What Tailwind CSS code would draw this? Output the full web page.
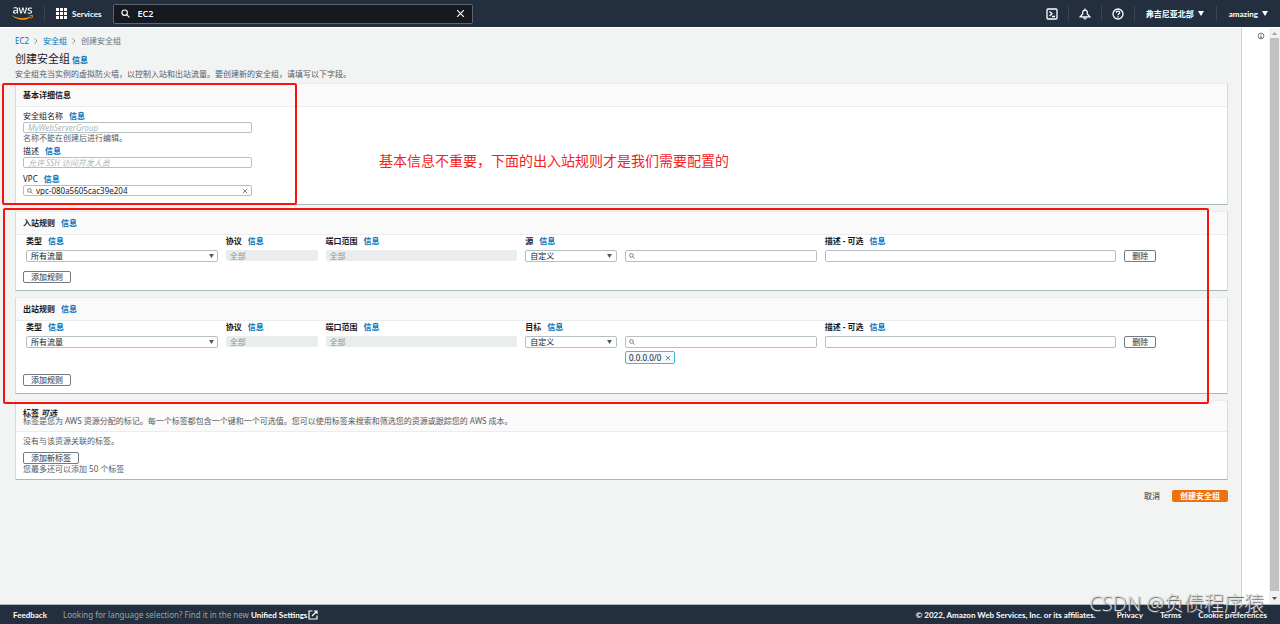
<!DOCTYPE html>
<html lang="zh-CN">
<head>
<meta charset="utf-8">
<meta name="viewport" content="width=device-width, initial-scale=1">
<title>创建安全组 | EC2</title>
<script src="https://cdn.jsdelivr.net/npm/@tailwindcss/browser@4"></script>
</head>
<body class="font-['Noto_Sans','Noto_Sans_CJK_SC',sans-serif] text-[8px] leading-3 text-[#16191f] bg-[#f2f3f3]">
<svg class="hidden" aria-hidden="true">
  <symbol id="search" viewBox="0 0 16 16"><circle cx="6.5" cy="6.5" r="4.8" fill="none" stroke="currentColor" stroke-width="2"/><path d="M10 10l5 5" stroke="currentColor" stroke-width="2"/></symbol>
  <symbol id="close" viewBox="0 0 16 16"><path d="M2 2l12 12M14 2L2 14" fill="none" stroke="currentColor" stroke-width="2"/></symbol>
  <symbol id="caret" viewBox="0 0 10 8"><path d="M0 0h10L5 8z" fill="currentColor"/></symbol>
</svg>
<div class="relative flex min-h-screen flex-col">
  <header class="flex h-[27px] items-center bg-[#232f3e] pr-3 font-['Lato','Noto_Sans_CJK_SC',sans-serif] font-bold text-white">
    <a href="#" aria-label="AWS" class="ml-3 w-[21px]">
      <svg viewBox="0 0 304 182" class="h-[13px] w-[21px]"><path fill="#fff" d="M86.4 66.4c0 3.7.4 6.7 1.1 8.9.8 2.200 1.800 4.600 3.200 7.200.5.8.7 1.600.7 2.300 0 1-.6 2-1.900 3l-6.300 4.200c-.9.6-1.800.9-2.600.9-1 0-2-.5-3-1.400-1.400-1.500-2.600-3.100-3.600-4.700-1-1.700-2-3.600-3.100-5.900-7.800 9.200-17.600 13.800-29.400 13.800-8.400 0-15.100-2.400-20-7.200-4.900-4.800-7.400-11.200-7.400-19.200 0-8.500 3-15.400 9.100-20.600 6.100-5.200 14.200-7.800 24.500-7.800 3.400 0 6.900.3 10.600.8 3.700.5 7.500 1.300 11.500 2.200v-7.300c0-7.600-1.600-12.900-4.700-16-3.200-3.100-8.600-4.600-16.300-4.600-3.500 0-7.100.4-10.800 1.300-3.700.9-7.300 2-10.800 3.400-4.700 2-6.600.8-6.600-3.300v-4.900c0-3 .5-4.400 3.600-6 8.300-4.100 18.200-6.100 28.700-5.900 12.100 0 20.900 2.700 26.600 8.200 5.600 5.500 8.500 13.800 8.500 25v32.900zM45.800 81.600c3.300 0 6.700-.6 10.300-1.800 7.200-2.400 12-8.700 13-15.200V55c-17-4.100-35-3.100-35 12 0 9.500 3.900 14.600 11.700 14.600zm80.300 10.800c-3.400 0-4.900-1.200-5.900-4.300L96.700 10.800c-1.300-4.500-.4-5.900 3.100-5.900h9.800c3.400 0 4.900 1.300 5.900 4.300l16.800 66.200 15.600-66.200c.9-3.100 2.400-4.300 5.900-4.300h8c3.500 0 5 1.300 5.900 4.300l15.800 67 17.300-67c1-3 2.500-4.300 5.900-4.300h9.300c3.200 0 4.200 1.700 3.100 5.900L195 88.100c-1 3.100-2.500 4.300-5.900 4.300h-8.600c-3.500 0-5-1.300-5.900-4.400L159.100 23.500l-15.400 64.400c-.9 3.100-2.400 4.400-5.900 4.400zm128.500 2.700c-10.500 0-20.600-2.300-26-5.400-3.300-1.900-3.500-3.300-3.500-6.500v-5.100c0-3.500 1.600-4.500 6.500-2.600 7.500 3.200 14.500 5 23 5 12 0 18.200-4.300 18.200-12.300 0-7-3-9.100-13.100-12.300l-14.100-4.400C232.400 47.800 227 39.500 227 30c0-16.500 13.500-26.500 32.500-26.500 9 0 17.500 1.500 24.300 4.700 4.500 2.200 5.200 3.500 5.200 7v4.700c0 3.900-1.600 5-6 3-6-2.700-12.500-4.200-20.200-4.200-11 0-17 3.600-17 11 0 6.200 3.200 9 13.400 12.200l13.800 4.400C286.500 50.700 292 57.500 292 67.400c0 18-14.500 27.700-37.400 27.700z"/><path fill="#f90" d="M273.500 143.700c-32.900 24.300-80.700 37.200-121.800 37.200-57.600 0-109.500-21.300-148.700-56.700-3.100-2.800-.3-6.600 3.400-4.400 42.400 24.600 94.700 39.500 148.800 39.500 36.500 0 76.600-7.600 113.500-23.200 5.500-2.500 10.200 3.600 4.800 7.600z"/><path fill="#f90" d="M287.200 128.100c-4.200-5.400-27.800-2.600-38.500-1.300-3.200.4-3.700-2.400-.8-4.500 18.800-13.200 49.700-9.400 53.300-5 3.600 4.500-1 35.400-18.600 50.200-2.700 2.300-5.300 1.100-4.100-1.900 4-9.900 12.900-32.200 8.700-37.500z"/></svg>
    </a>
    <span class="ml-[11px] h-[15px] w-px bg-[#3b4654]"></span>
    <button type="button" class="ml-[11px] flex items-center gap-[5px] text-[8px]">
      <svg viewBox="0 0 11 11" class="size-[11px]" fill="#fff"><path d="M0 0h3v3H0zM4 0h3v3H4zM8 0h3v3H8zM0 4h3v3H0zM4 4h3v3H4zM8 4h3v3H8zM0 8h3v3H0zM4 8h3v3H4zM8 8h3v3H8z"/></svg>
      Services
    </button>
    <label class="ml-3 flex h-5 w-[360px] items-center rounded-xs border border-[#5c6670] bg-[#16191f] px-[7px]">
      <svg class="size-[9px] shrink-0"><use href="#search"/></svg>
      <input aria-label="搜索" value="EC2" class="ml-[7px] min-w-0 flex-1 bg-transparent font-['Open_Sans',sans-serif] text-[9px] font-semibold outline-none">
      <svg class="size-[9px] shrink-0"><use href="#close"/></svg>
    </label>
    <nav class="ml-auto flex items-center">
      <button type="button" aria-label="CloudShell"><svg viewBox="0 0 12 12" class="size-[12px]" fill="none" stroke="#fff" stroke-width="1.300"><rect x="1" y="1" width="10" height="10" rx="1"/><path d="M3.500 3.500L6 5.700 3.500 8M6 8.500h3"/></svg></button>
      <span class="ml-[10px] h-[15px] w-px bg-[#3b4654]"></span>
      <button type="button" aria-label="通知" class="ml-[10px]"><svg viewBox="0 0 12 12" class="size-[12px]" fill="none" stroke="#fff" stroke-width="1.200"><path d="M6 .5v1M3.700 6V4.500a2.300 2.300 0 014.600 0V6l2.500 2.800H1.200zM4.700 9.200q0 1.800 1.300 1.800t1.300-1.800"/></svg></button>
      <span class="ml-[10px] h-[15px] w-px bg-[#3b4654]"></span>
      <button type="button" aria-label="帮助" class="ml-[10px]"><svg viewBox="0 0 12 12" class="size-[12px]" fill="none" stroke="#fff" stroke-width="1.300"><circle cx="6" cy="6" r="5"/><path d="M4.300 4.800C4.300 2.700 7.700 2.700 7.700 4.700 7.700 5.800 6 5.800 6 7.200M6 8.200v1.200"/></svg></button>
      <span class="ml-[10px] h-[15px] w-px bg-[#3b4654]"></span>
      <button type="button" class="ml-[11px] flex items-center gap-1">弗吉尼亚北部 <svg class="h-[5px] w-[6px]"><use href="#caret"/></svg></button>
      <span class="ml-3 h-[15px] w-px bg-[#3b4654]"></span>
      <button type="button" class="ml-3 flex items-center gap-1">amazing <svg class="h-[5px] w-[6px]"><use href="#caret"/></svg></button>
    </nav>
  </header>

  <div class="flex flex-1 border-t border-white">
    <main class="min-w-0 flex-1 pt-[7px] pr-[13px] pl-[15px]">
      <nav class="flex items-center gap-[5px] text-[#687078]" aria-label="导航路径">
        <a href="#" class="text-[#0073bb]">EC2</a>
        <svg viewBox="0 0 4 6" class="h-[6px] w-[4px]" fill="none" stroke="#879596"><path d="M.5.5L3 3 .5 5.500"/></svg>
        <a href="#" class="text-[#0073bb]">安全组</a>
        <svg viewBox="0 0 4 6" class="h-[6px] w-[4px]" fill="none" stroke="#879596"><path d="M.5.5L3 3 .5 5.500"/></svg>
        <span>创建安全组</span>
      </nav>
      <div class="mt-1 flex items-baseline gap-0.5">
        <h1 class="text-[11px] leading-4">创建安全组</h1>
        <a href="#" class="font-bold text-[#0073bb]">信息</a>
      </div>
      <p class="mt-px mb-[3px] text-[#545b64]">安全组充当实例的虚拟防火墙，以控制入站和出站流量。要创建新的安全组，请填写以下字段。</p>

      <form class="flex flex-col gap-[6px]">
        <section class="border border-b-[#aab7b8] border-x-[#d5dbdb] border-t-[#eaeded] bg-white">
          <div class="flex h-[23px] items-center border-b border-[#eaeded] bg-[#fafafa] px-[7px]"><h2 class="font-bold">基本详细信息</h2></div>
          <div class="flex flex-col px-[7px] pt-[3px] pb-2">
            <div class="flex gap-[6px]"><label for="name">安全组名称</label><a href="#" class="font-bold text-[#0073bb]">信息</a></div>
            <input id="name" placeholder="MyWebServerGroup" class="h-[11px] w-[229px] rounded-xs border border-[#b5c0c1] bg-white px-1 leading-[9px] placeholder:text-[#aab7b8] placeholder:italic">
            <p class="leading-[9px] text-[#545b64]">名称不能在创建后进行编辑。</p>
            <div class="mt-[3px] flex gap-[6px]"><label for="desc">描述</label><a href="#" class="font-bold text-[#0073bb]">信息</a></div>
            <input id="desc" placeholder="允许 SSH 访问开发人员" class="h-[11px] w-[229px] rounded-xs border border-[#b5c0c1] bg-white px-1 leading-[9px] placeholder:text-[#aab7b8] placeholder:italic">
            <div class="mt-[5px] flex gap-[6px]"><label for="vpc">VPC</label><a href="#" class="font-bold text-[#0073bb]">信息</a></div>
            <div class="flex h-[11px] w-[229px] items-center rounded-xs border border-[#b5c0c1] px-[3px] text-[#545b64]">
              <svg class="size-[6px] shrink-0"><use href="#search"/></svg>
              <input id="vpc" value="vpc-080a5605cac39e204" class="ml-[3px] h-[9px] min-w-0 flex-1 leading-[9px] text-[#16191f] outline-none">
              <button type="button" aria-label="清除" class="flex"><svg class="size-[6px]"><use href="#close"/></svg></button>
            </div>
          </div>
        </section>

        <section class="border border-b-[#aab7b8] border-x-[#d5dbdb] border-t-[#eaeded] bg-white">
          <div class="flex h-[23px] items-center gap-[6px] border-b border-[#eaeded] bg-[#fafafa] px-[7px]"><h2 class="font-bold">入站规则</h2><a href="#" class="font-bold text-[#0073bb]">信息</a></div>
          <div class="px-[7px] pb-[7px]">
            <div class="grid grid-cols-12 gap-x-2 gap-y-1 pr-1 pl-[3px] leading-[11px]">
              <div class="col-span-2 flex gap-[6px] font-bold"><label for="in-type">类型</label><a href="#" class="text-[#0073bb]">信息</a></div>
              <div class="flex gap-[6px] font-bold"><label for="in-proto">协议</label><a href="#" class="text-[#0073bb]">信息</a></div>
              <div class="col-span-2 flex gap-[6px] font-bold"><label for="in-port">端口范围</label><a href="#" class="text-[#0073bb]">信息</a></div>
              <div class="col-span-3 flex gap-[6px] font-bold"><label for="in-src">源</label><a href="#" class="text-[#0073bb]">信息</a></div>
              <div class="col-span-4 flex gap-[6px] font-bold"><label for="in-desc">描述 - 可选</label><a href="#" class="text-[#0073bb]">信息</a></div>
              <div class="relative col-span-2"><select id="in-type" class="block h-3 w-full appearance-none rounded-xs border border-[#b5c0c1] bg-white px-1 leading-[10px]"><option>所有流量</option></select><svg class="pointer-events-none absolute top-1 right-1 h-1 w-[5px] text-[#545b64]"><use href="#caret"/></svg></div>
              <input id="in-proto" disabled value="全部" class="h-[11px] w-full min-w-0 rounded-xs bg-[#eaeded] px-1 text-[#879596]">
              <input id="in-port" disabled value="全部" class="col-span-2 h-[11px] w-full min-w-0 rounded-xs bg-[#eaeded] px-1 text-[#879596]">
              <div class="relative"><select id="in-src" class="block h-3 w-full appearance-none rounded-xs border border-[#b5c0c1] bg-white px-1 leading-[10px]"><option>自定义</option></select><svg class="pointer-events-none absolute top-1 right-[5px] h-1 w-[5px] text-[#545b64]"><use href="#caret"/></svg></div>
              <div class="col-span-2 flex h-3 items-center rounded-xs border border-[#b5c0c1] px-[3px] text-[#545b64]"><svg class="size-[6px] shrink-0"><use href="#search"/></svg><input aria-label="源地址" class="h-[10px] min-w-0 flex-1 outline-none"></div>
              <input id="in-desc" class="col-span-3 h-3 w-full min-w-0 rounded-xs border border-[#b5c0c1] px-1">
              <div class="flex"><button type="button" class="h-3 rounded-xs border border-[#737a82] px-[7px] leading-[10px] font-medium text-[#545b64]">删除</button></div>
            </div>
            <button type="button" class="mt-[9px] block h-3 rounded-xs border border-[#737a82] px-[7px] leading-[10px] font-medium text-[#545b64]">添加规则</button>
          </div>
        </section>

        <section class="border border-b-[#aab7b8] border-x-[#d5dbdb] border-t-[#eaeded] bg-white">
          <div class="flex h-[23px] items-center gap-[6px] border-b border-[#eaeded] bg-[#fafafa] px-[7px]"><h2 class="font-bold">出站规则</h2><a href="#" class="font-bold text-[#0073bb]">信息</a></div>
          <div class="px-[7px] pb-[7px]">
            <div class="grid grid-cols-12 gap-x-2 gap-y-1 pr-1 pl-[3px] leading-[11px]">
              <div class="col-span-2 flex gap-[6px] font-bold"><label for="out-type">类型</label><a href="#" class="text-[#0073bb]">信息</a></div>
              <div class="flex gap-[6px] font-bold"><label for="out-proto">协议</label><a href="#" class="text-[#0073bb]">信息</a></div>
              <div class="col-span-2 flex gap-[6px] font-bold"><label for="out-port">端口范围</label><a href="#" class="text-[#0073bb]">信息</a></div>
              <div class="col-span-3 flex gap-[6px] font-bold"><label for="out-dst">目标</label><a href="#" class="text-[#0073bb]">信息</a></div>
              <div class="col-span-4 flex gap-[6px] font-bold"><label for="out-desc">描述 - 可选</label><a href="#" class="text-[#0073bb]">信息</a></div>
              <div class="relative col-span-2"><select id="out-type" class="block h-3 w-full appearance-none rounded-xs border border-[#b5c0c1] bg-white px-1 leading-[10px]"><option>所有流量</option></select><svg class="pointer-events-none absolute top-1 right-1 h-1 w-[5px] text-[#545b64]"><use href="#caret"/></svg></div>
              <input id="out-proto" disabled value="全部" class="h-[11px] w-full min-w-0 rounded-xs bg-[#eaeded] px-1 text-[#879596]">
              <input id="out-port" disabled value="全部" class="col-span-2 h-[11px] w-full min-w-0 rounded-xs bg-[#eaeded] px-1 text-[#879596]">
              <div class="relative"><select id="out-dst" class="block h-3 w-full appearance-none rounded-xs border border-[#b5c0c1] bg-white px-1 leading-[10px]"><option>自定义</option></select><svg class="pointer-events-none absolute top-1 right-[5px] h-1 w-[5px] text-[#545b64]"><use href="#caret"/></svg></div>
              <div class="col-span-2">
                <div class="flex h-3 items-center rounded-xs border border-[#b5c0c1] px-[3px] text-[#545b64]"><svg class="size-[6px] shrink-0"><use href="#search"/></svg><input aria-label="目标地址" class="h-[10px] min-w-0 flex-1 outline-none"></div>
                <div class="mt-[3px] flex h-[13px] w-fit items-center gap-1 rounded-xs border border-[#44b9d6] bg-[#f1faff] px-[3px] text-[#16191f]">0.0.0.0/0 <button type="button" aria-label="移除 0.0.0.0/0" class="mt-px flex text-[#545b64]"><svg class="size-[6px]"><use href="#close"/></svg></button></div>
              </div>
              <input id="out-desc" class="col-span-3 h-3 w-full min-w-0 rounded-xs border border-[#b5c0c1] px-1">
              <div class="flex"><button type="button" class="h-3 self-start rounded-xs border border-[#737a82] px-[7px] leading-[10px] font-medium text-[#545b64]">删除</button></div>
            </div>
            <button type="button" class="mt-[10px] block h-3 rounded-xs border border-[#737a82] px-[7px] leading-[10px] font-medium text-[#545b64]">添加规则</button>
          </div>
        </section>

        <section class="border border-b-[#aab7b8] border-x-[#d5dbdb] border-t-[#eaeded] bg-white">
          <div class="border-b border-[#eaeded] bg-[#fafafa] px-[7px] pt-[7px] pb-[6px] leading-[9px]">
            <h2 class="h-2 font-bold">标签 <i>可选</i></h2>
            <p class="text-[#545b64]">标签是您为 AWS 资源分配的标记。每一个标签都包含一个键和一个可选值。您可以使用标签来搜索和筛选您的资源或跟踪您的 AWS 成本。</p>
          </div>
          <div class="px-[7px] pt-[3px] pb-[6px] text-[#545b64]">
            <p>没有与该资源关联的标签。</p>
            <button type="button" class="mt-[5px] block h-3 rounded-xs border border-[#737a82] px-[7px] leading-[10px] font-medium">添加新标签</button>
            <p class="leading-[9px]">您最多还可以添加 50 个标签</p>
          </div>
        </section>
        <div class="mt-1 flex justify-end gap-3">
          <button type="button" class="h-3 font-medium text-[#545b64]">取消</button>
          <button type="submit" class="h-3 rounded-xs bg-[#ec7211] px-2 font-bold text-white">创建安全组</button>
        </div>
      </form>
    </main>
    <aside class="flex w-7 justify-end border-l border-[#cfd3d3] bg-white pt-1 pr-1">
      <button type="button" aria-label="信息面板" class="h-2"><svg viewBox="0 0 8 8" class="size-2" fill="none" stroke="#545b64" stroke-width=".8"><circle cx="4" cy="4" r="2.900"/><path d="M4 2v.8M4 3.500v2M3 5.500h2"/></svg></button>
    </aside>
    <div class="flex w-[11px] flex-col items-center bg-[#f1f1f1]" aria-hidden="true">
      <svg viewBox="0 0 11 10" class="h-[10px] w-[11px]"><path d="M3 7h5L5.500 4z" fill="#a3a3a3"/></svg>
      <div class="w-[9px] flex-1 bg-[#c1c1c1]"></div>
      <svg viewBox="0 0 11 13" class="h-[13px] w-[11px]"><path d="M3 6h5L5.500 9z" fill="#505050"/></svg>
    </div>
  </div>

  <footer class="flex h-5 items-center border-t border-[#aab7b8] bg-[#232f3e] px-[13px] font-['Lato',sans-serif] font-bold text-white">
    <a href="#">Feedback</a>
    <p class="ml-4 font-['Noto_Sans',sans-serif] font-normal text-[#95a5a6]">Looking for language selection? Find it in the new <a href="#" class="font-['Lato',sans-serif] font-bold text-white">Unified Settings</a></p>
    <svg viewBox="0 0 10 10" class="ml-px size-[10px]" fill="none" stroke="#fff" stroke-width="1.200"><path d="M4.500 1H1v8h8V5.500M6 1h3v3M9 1L4 6"/></svg>
    <div class="ml-auto flex gap-[17px]"><span class="mr-1">© 2022, Amazon Web Services, Inc. or its affiliates.</span><a href="#">Privacy</a><a href="#">Terms</a><a href="#">Cookie preferences</a></div>
  </footer>

  <!-- Annotations drawn over the console -->
  <div class="pointer-events-none absolute top-[83px] left-[2px] h-[122px] w-[295px] rounded-xs border-2 border-[#fd0f0b]"></div>
  <div class="pointer-events-none absolute top-[208px] right-[71px] left-[3px] h-[196px] rounded-xs border-2 border-[#fd0f0b]"></div>
  <p class="pointer-events-none absolute top-[151px] left-[379px] text-[14px] leading-5 text-[#f5221b]">基本信息不重要，下面的出入站规则才是我们需要配置的</p>
  <p class="pointer-events-none absolute right-4 bottom-2 font-['Open_Sans','Noto_Sans_CJK_SC',sans-serif] text-[20px] leading-6 font-light text-[#dcdcdc] [text-shadow:1px_1px_1px_#555]">CSDN @负债程序猿</p>
</div>
</body>
</html>
